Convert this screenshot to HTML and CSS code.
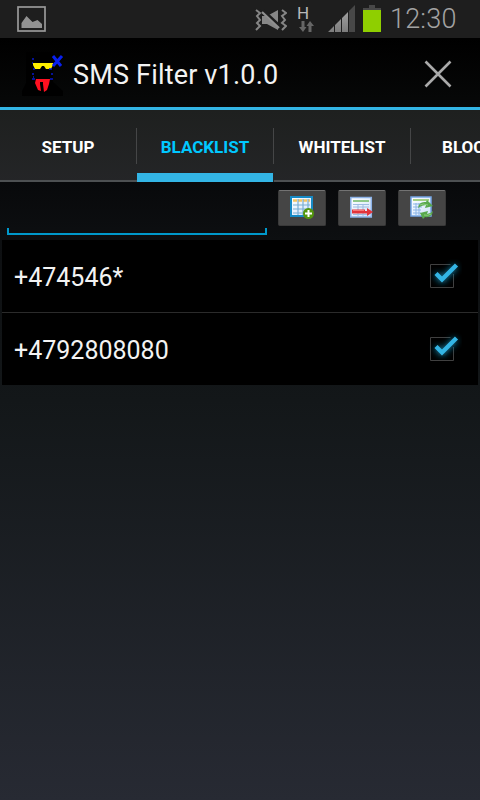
FILE: index.html
```
<!DOCTYPE html>
<html lang="en">
<head>
<meta charset="utf-8">
<title>SMS Filter</title>
<link rel="stylesheet" href="styles.css">
</head>
<body>
<svg class="defs" width="0" height="0" aria-hidden="true">
  <defs>
    <linearGradient id="grey" x1="0" y1="0" x2="0" y2="1"><stop offset="0" stop-color="#a0a0a0"/><stop offset="1" stop-color="#7c7c7c"/></linearGradient>
    <linearGradient id="sheet" x1="0" y1="0" x2="1" y2="1"><stop offset="0" stop-color="#fff"/><stop offset="1" stop-color="#cfe2fa"/></linearGradient>
    <filter id="glow" x="-50%" y="-50%" width="200%" height="200%"><feGaussianBlur stdDeviation="3"/></filter>
    <symbol id="check" viewBox="0 0 40 40">
      <path d="M28.500 9.500H8.500V32.500H31.500V19" fill="none" stroke="#404040"/>
      <path d="M14 19L20 25L34 11" fill="none" stroke="#1684aa" stroke-width="5" filter="url(#glow)"/>
      <path d="M14 18.500L20 24.500L34.500 10" fill="none" stroke="#33b5e5" stroke-width="4.400"/>
    </symbol>
  </defs>
</svg>
<header class="status">
  <svg class="picture" width="29" height="26" viewBox="0 0 29 26"><rect x="1" y="1" width="27" height="24" fill="none" stroke="#999" stroke-width="1.700"/><path d="M4.500 22V17L9.500 10L15.500 16L20.500 14L25 18V22Z" fill="#929292"/></svg>
  <svg class="vibrate" width="32" height="22" viewBox="0 0 32 22"><path d="M1 1l4 3-3 3 3 4-3 3 3 3-4 4M27 1l4 3-4 3 3 4-3 3 4 3-4 4" fill="none" stroke="#858585" stroke-width="2"/><path d="M7 7h5l11-6v20l-11-6H7Z" fill="#878787"/><path d="M6 0L24 17" stroke="#1e1e1e" stroke-width="4"/><path d="M7 3L24 19" stroke="#909090" stroke-width="2.200"/></svg>
  <div class="network"><span>H</span><svg width="15" height="11" viewBox="0 0 15 11"><path d="M2.500 0h3v6h2L4 11 0 6h2.500ZM9.500 11V5H7.500L11 0l4 5h-2.500v6Z" fill="#666"/></svg></div>
  <svg class="signal" width="28" height="28" viewBox="0 0 28 28"><path d="M0 27l6-6v6ZM7 20l6-6v13H7ZM14 13l6-6v20h-6Z" fill="url(#grey)"/><path d="M21 6l6-6v27h-6Z" fill="#484848"/></svg>
  <svg class="battery" width="18" height="27" viewBox="0 0 18 27"><path d="M6 0h6v3h6v2H0V3h6Z" fill="#484848"/><path d="M0 5h18v22H0Z" fill="#8fcf00"/></svg>
  <span class="clock">12:30</span>
</header>
<div class="titlebar">
  <svg class="logo" width="42" height="44" viewBox="0 0 42 44"><path d="M4 0h27v30l10 9v5H0v-5l4-8Z" fill="#000"/><path d="M11 11h20v2l-2 4h-5l-2-3h-2l-2 3h-5l-2-4Z" fill="#fff000"/><path d="M31 4l8 10M40 4l-9 10" stroke="#0820ef" stroke-width="3"/><path d="M10 7h2M10 11h1M11 17h2M27 17h3M10 22h2M11 25h1M29 22h2M10 27h3M28 27h3" stroke="#0719ca" stroke-width="1.300"/><path d="M14 27h14l-1 5-2 6-3 2-1-8v-2h-3v2l1 7-3-1-3-7Z" fill="#ff1020"/></svg>
  <h1>SMS Filter v1.0.0</h1>
  <svg class="close" width="28" height="28" viewBox="0 0 28 28"><path d="M1.500 1.500l25 25M26.500 1.500l-25 25" stroke="#aaa" stroke-width="2.600"/></svg>
</div>
<nav class="tabs">
  <div class="tab"><span>SETUP</span></div>
  <div class="tab active"><span>BLACKLIST</span></div>
  <div class="tab"><span>WHITELIST</span></div>
  <div class="tab"><span>BLOCKED</span></div>
</nav>
<main>
  <div class="tools">
    <div class="field"></div>
    <div class="button"><svg width="24" height="24" viewBox="0 0 24 24"><rect x="1" y="1" width="21" height="19" fill="url(#sheet)" stroke="#168ac5" stroke-width="2"/><path d="M3 4.500h17" stroke="#f3c462" stroke-width="2.500" stroke-dasharray="4 1"/><path d="M3 9h17M3 13h17M3 17h12M8 3v16M13 3v16M18 3v12" stroke="#79aed4" stroke-width="1.200"/><circle cx="18.500" cy="17.500" r="5.500" fill="#53960d"/><path d="M18.500 14v7M15 17.500h7" stroke="#fff" stroke-width="2"/></svg></div>
    <div class="button"><svg width="24" height="24" viewBox="0 0 24 24"><rect x=".8" y="1.500" width="20.500" height="19.500" fill="url(#sheet)" stroke="#8cb2e7" stroke-width="1.500"/><path d="M3 5h16" stroke="#8fc889" stroke-width="2"/><path d="M3 8.500h16M3 11h16M3 18.500h16M8 8v12M13 8v12" stroke="#9ebce2"/><path d="M2 13.500h13M17 15.500h1" stroke="none"/><path d="M2 13.500h13v1.500h2v-3l6 4-6 4v-2.500H2Z" fill="#e2353c"/><path d="M3 14.500h11" stroke="#f77777"/></svg></div>
    <div class="button"><svg width="24" height="24" viewBox="0 0 24 24"><rect x="1" y="1" width="20" height="19" fill="url(#sheet)" stroke="#75a7e6" stroke-width="1.500"/><path d="M3 4h16" stroke="#a3cf84" stroke-width="2"/><path d="M3 8h9M3 11h9M3 14h8M3 17h8M6 7v12M9 7v12" stroke="#8bb4e5"/><path d="M8 12q1-7 8-6l1-2 6 6-8 2 1-3q-4 0-8 3ZM23 15q-1 7-8 6l-2 2-3-6 8-2-1 3q3 0 6-3Z" fill="#59a84c"/><path d="M10 9q3-2 8 0M21 18q-3 2-7 1" fill="none" stroke="#8fcf80"/></svg></div>
  </div>
  <div class="list">
    <div class="row"><span>+474546*</span><svg width="40" height="40"><use href="#check"/></svg></div>
    <div class="row"><span>+4792808080</span><svg width="40" height="40"><use href="#check"/></svg></div>
  </div>
</main>
</body>
</html>
```
FILE: styles.css
```
* { box-sizing: border-box; }
html { height: 100%; }
body {
  margin: 0;
  width: 480px;
  height: 800px;
  overflow: hidden;
  display: flex;
  flex-direction: column;
  font-family: Roboto, "Liberation Sans", sans-serif;
  color: #f3f3f3;
  background: linear-gradient(#000 0, #08090b 182px, #0d0f11 240px, #131719 400px, #272a33 800px);
}
svg { display: block; flex: none; }
.defs { position: absolute; }
.status {
  height: 38px;
  flex: none;
  display: flex;
  background: #1e1e1e;
}
.picture { margin: 6px 0 0 17px; }
.vibrate { margin: 9px 0 0 209px; }
.network { width: 18px; margin: 5px 0 0 10px; }
.network span {
  display: block;
  height: 16px;
  font-size: 17px;
  line-height: 17px;
  color: #b8b8b8;
}
.network svg { margin-left: 2px; }
.signal { margin: 5px 0 0 13px; }
.battery { margin: 5px 0 0 7px; }
.clock {
  margin-left: 9px;
  font-size: 27px;
  line-height: 39px;
  font-weight: 300;
  letter-spacing: .2px;
  color: #a3a3a3;
}
.titlebar {
  height: 72px;
  flex: none;
  display: flex;
  border-bottom: 3px solid #33b5e5;
  background: linear-gradient(#000, #070808);
}
.logo { margin: 14px 0 0 22px; }
h1 {
  width: 240px;
  margin: 0 0 0 9px;
  font-size: 27px;
  line-height: 75px;
  font-weight: 400;
  letter-spacing: .18px;
  white-space: nowrap;
}
.close { margin: 22px 0 0 111px; }
.tabs {
  width: 480px;
  height: 72px;
  flex: none;
  display: flex;
  overflow: hidden;
  background: linear-gradient(#1e201f, #242527);
}
.tab {
  width: 137px;
  height: 72px;
  flex: none;
  display: flex;
  padding-top: 18px;
  border-bottom: 2px solid #4d5052;
  font-size: 17px;
  line-height: 39px;
  font-weight: 700;
  text-align: center;
  color: #fff;
}
.tab span {
  width: 137px;
  height: 36px;
  border-right: 1px solid #454647;
}
.tab.active {
  width: 136px;
  margin-right: 1px;
  border-bottom: 9px solid #33b5e5;
  color: #00c8ff;
}
.tab.active span { flex: none; }
.tools {
  height: 58px;
  display: flex;
  padding: 8px 0 0 7px;
}
.field {
  width: 260px;
  height: 7px;
  margin: 38px 11px 0 0;
  border: 2px solid #0099cc;
  border-top: 0;
}
.button {
  width: 48px;
  height: 36px;
  margin-right: 12px;
  padding: 5px 0 0 11px;
  border: 1px solid #393939;
  border-top-color: #737373;
  border-radius: 2px;
  background: #454545;
}
.list {
  margin: 0 2px;
  background: #000;
}
.row {
  height: 72px;
  display: flex;
  justify-content: space-between;
  padding: 0 16px 0 12px;
  font-size: 25px;
  line-height: 75px;
}
.row + .row {
  height: 73px;
  border-top: 1px solid #2b2b2b;
}
.row svg { margin-top: 15px; }
```
